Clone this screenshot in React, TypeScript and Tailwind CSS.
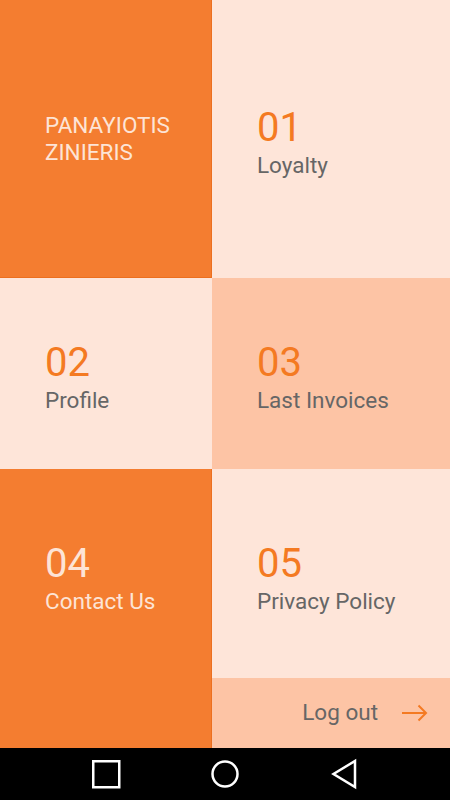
const font = { fontFamily: "Roboto, 'Noto Sans', sans-serif" }

function Tile({ num, label, light }: { num: string; label: string; light?: boolean }) {
  return (
    <div className="pl-[45px] pt-[4px]">
      <div className={`text-[40px] leading-[48px] ${light ? "text-[#fde4d6]" : "text-[#f47a22]"}`}>{num}</div>
      <div className={`text-[22.5px] leading-[26px] ${light ? "text-[#fde4d6]" : "text-[#666666]"}`}>{label}</div>
    </div>
  )
}

export default function App() {
  return (
    <div className="w-[450px] h-[800px] flex flex-col bg-black" style={font}>
      {/* Row 1 */}
      <div className="flex h-[278px]">
        <div className="w-[212px] bg-[#f47d30] border-r border-b border-[#ec6f1f] flex items-center pl-[45px]">
          <div className="text-[22.5px] leading-[27px] text-[#fde4d6]">
            PANAYIOTIS
            <br />
            ZINIERIS
          </div>
        </div>
        <div className="flex-1 bg-[#fee5d9] flex items-center">
          <Tile num="01" label="Loyalty" />
        </div>
      </div>

      {/* Row 2 */}
      <div className="flex h-[191px]">
        <div className="w-[212px] bg-[#fee5d9] flex items-center">
          <Tile num="02" label="Profile" />
        </div>
        <div className="flex-1 bg-[#fdc4a5] flex items-center">
          <Tile num="03" label="Last Invoices" />
        </div>
      </div>

      {/* Row 3 */}
      <div className="flex h-[279px]">
        <div className="w-[212px] bg-[#f47d30] border-r border-[#ec6f1f]">
          <div className="h-[212px] flex items-center">
            <Tile num="04" label="Contact Us" light />
          </div>
        </div>
        <div className="flex-1 flex flex-col">
          <div className="h-[209px] bg-[#fee5d9] flex items-center">
            <div className="pt-[3px]">
              <Tile num="05" label="Privacy Policy" />
            </div>
          </div>
          <div className="flex-1 bg-[#fdc4a5] flex items-center justify-end pr-[22px] gap-[24px]">
            <span className="text-[22.5px] text-[#666666]">Log out</span>
            <svg width="26" height="18" viewBox="0 0 26 18" fill="none" stroke="#f47a22" strokeWidth="2">
              <path d="M0 9h24" />
              <path d="M16.5 1.5 24 9l-7.5 7.5" />
            </svg>
          </div>
        </div>
      </div>

      {/* Nav bar */}
      <div className="h-[52px] bg-black relative">
        <svg className="absolute left-0 top-0" width="450" height="52" viewBox="0 0 450 52" fill="none" stroke="white" strokeWidth="2.5">
          <rect x="93.25" y="13.25" width="26" height="26" />
          <circle cx="225" cy="26" r="12.5" />
          <path d="M355 13v26L333.5 26Z" strokeLinejoin="miter" />
        </svg>
      </div>
    </div>
  )
}
